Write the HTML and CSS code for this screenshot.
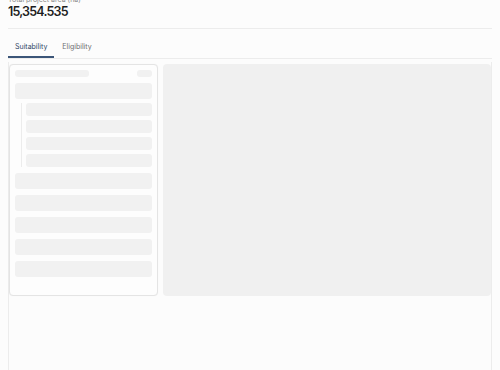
FILE: index.html
```html
<!DOCTYPE html>
<html>
<head>
    <title>Project Area</title>
    <link rel="stylesheet" href="styles.css">
</head>
<body>
    <div class="summary">
        <p class="summary-label">Total project area (ha)</p>
        <p class="summary-value">15,354.535</p>
    </div>

    <div class="tabs">
        <span class="tab active">Suitability</span>
        <span class="tab">Eligibility</span>
    </div>

    <div class="content">
        <div class="side-panel">
            <div class="side-head">
                <div class="bone bone-title"></div>
                <div class="bone bone-tag"></div>
            </div>
            <div class="bone bone-row"></div>
            <div class="sub-list">
                <div class="bone bone-sub"></div>
                <div class="bone bone-sub"></div>
                <div class="bone bone-sub"></div>
                <div class="bone bone-sub"></div>
            </div>
            <div class="row-list">
                <div class="bone bone-row"></div>
                <div class="bone bone-row"></div>
                <div class="bone bone-row"></div>
                <div class="bone bone-row"></div>
                <div class="bone bone-row"></div>
            </div>
        </div>
        <div class="map-panel"></div>
    </div>
</body>
</html>
```

FILE: styles.css
```css
body {
    margin: 0;
    background-color: #fcfcfc;
    font-family: Inter, "Liberation Sans", sans-serif;
}

.summary {
    margin: 0 8px;
    padding-bottom: 8px;
    border-bottom: 1px solid #ececec;
}
.summary-label {
    margin: -5px 0 0;
    font-size: 7px;
    line-height: 9px;
    color: #8a8a8a;
}
.summary-value {
    margin: 0;
    font-size: 12.5px;
    line-height: 16px;
    font-weight: 600;
    letter-spacing: -0.8px;
    color: #1c1c1c;
}

.tabs {
    display: flex;
    margin: 0 8px;
    padding-top: 13px;
    border-bottom: 1px solid #ececec;
}
.tab {
    padding: 0 7px 4px;
    font-size: 7px;
    line-height: 10px;
    color: #6e6e6e;
    border-bottom: 2px solid transparent;
    margin-right: 1px;
}
.tab.active {
    color: #2d4566;
    border-bottom-color: #3b5578;
}

.content {
    display: flex;
    gap: 5px;
    margin: 3px 8px 0;
    padding-top: 2px;
    height: 400px;
    align-items: flex-start;
    border-left: 1px solid #ececec;
    border-right: 1px solid #ececec;
}

.side-panel {
    width: 137px;
    padding: 5px 5px 18px;
    background-color: #fdfdfd;
    border: 1px solid #e4e4e4;
    border-radius: 4px;
    box-shadow: 0 0 1px rgba(0, 0, 0, 0.06);
}
.side-head {
    display: flex;
    justify-content: space-between;
    margin-bottom: 6px;
}

.bone {
    background-color: #f1f1f1;
    border-radius: 3px;
}
.bone-title {
    width: 74px;
    height: 7px;
}
.bone-tag {
    width: 15px;
    height: 7px;
}
.bone-row {
    height: 16px;
}
.bone-sub {
    height: 13px;
}

.sub-list {
    display: flex;
    flex-direction: column;
    gap: 4px;
    margin: 4px 0 6px 6px;
    padding-left: 4px;
    border-left: 1px solid #ececec;
}
.row-list {
    display: flex;
    flex-direction: column;
    gap: 6px;
}

.map-panel {
    flex: 1;
    height: 232px;
    background-color: #f0f0f0;
    border-radius: 4px;
}
```
